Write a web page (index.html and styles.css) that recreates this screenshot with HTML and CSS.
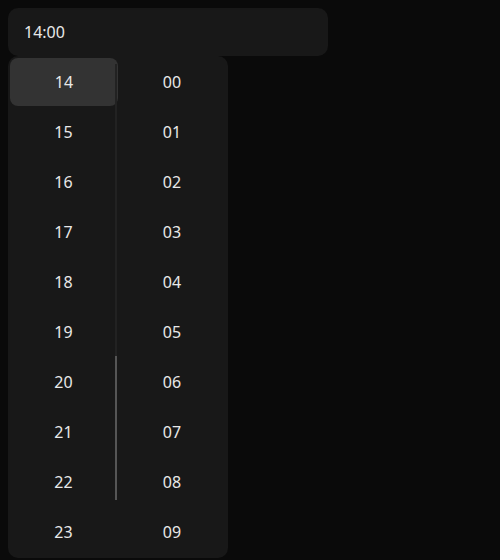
FILE: index.html
```html
<!DOCTYPE html>
<html>
<head>
<meta charset="utf-8">
<link rel="stylesheet" href="styles.css">
</head>
<body>
<div class="picker">
  <div class="field">14:00</div>
  <div class="dropdown">
    <div class="col hours">
      <div class="item selected">14</div>
      <div class="item">15</div>
      <div class="item">16</div>
      <div class="item">17</div>
      <div class="item">18</div>
      <div class="item">19</div>
      <div class="item">20</div>
      <div class="item">21</div>
      <div class="item">22</div>
      <div class="item">23</div>
      <div class="scrollbar"><div class="thumb"></div></div>
    </div>
    <div class="col minutes">
      <div class="item">00</div>
      <div class="item">01</div>
      <div class="item">02</div>
      <div class="item">03</div>
      <div class="item">04</div>
      <div class="item">05</div>
      <div class="item">06</div>
      <div class="item">07</div>
      <div class="item">08</div>
      <div class="item">09</div>
    </div>
  </div>
</div>
</body>
</html>
```
FILE: styles.css
```css
html, body {
  margin: 0;
  padding: 0;
  background: #0a0a0a;
  height: 100%;
  overflow: hidden;
}
body {
  padding: 8px;
  box-sizing: border-box;
  font-family: "Noto Sans", "Open Sans", sans-serif;
  color: #e8e8e8;
}
.picker {
  width: 320px;
}
.field {
  height: 48px;
  box-sizing: border-box;
  background: #181818;
  border-radius: 10px;
  padding: 0 16px;
  display: flex;
  align-items: center;
  font-size: 16px;
}
.dropdown {
  width: 220px;
  background: #181818;
  border-radius: 10px;
  display: grid;
  grid-template-columns: 109px 111px;
  padding: 2px 0;
}
.col {
  display: flex;
  flex-direction: column;
  gap: 2px;
  position: relative;
}
.hours {
  padding: 0 0 0 2px;
}
.item {
  height: 48px;
  display: flex;
  align-items: center;
  justify-content: center;
  font-size: 16px;
  border-radius: 8px;
}
.minutes .item {
  padding-right: 1px;
}
.selected {
  background: #333333;
  margin-right: -1px;
}
.scrollbar {
  position: absolute;
  right: 0;
  top: 6px;
  bottom: 56px;
  width: 2px;
  background: #222222;
  display: flex;
  flex-direction: column;
  justify-content: flex-end;
}
.thumb {
  height: 144px;
  background: #555555;
}
```
